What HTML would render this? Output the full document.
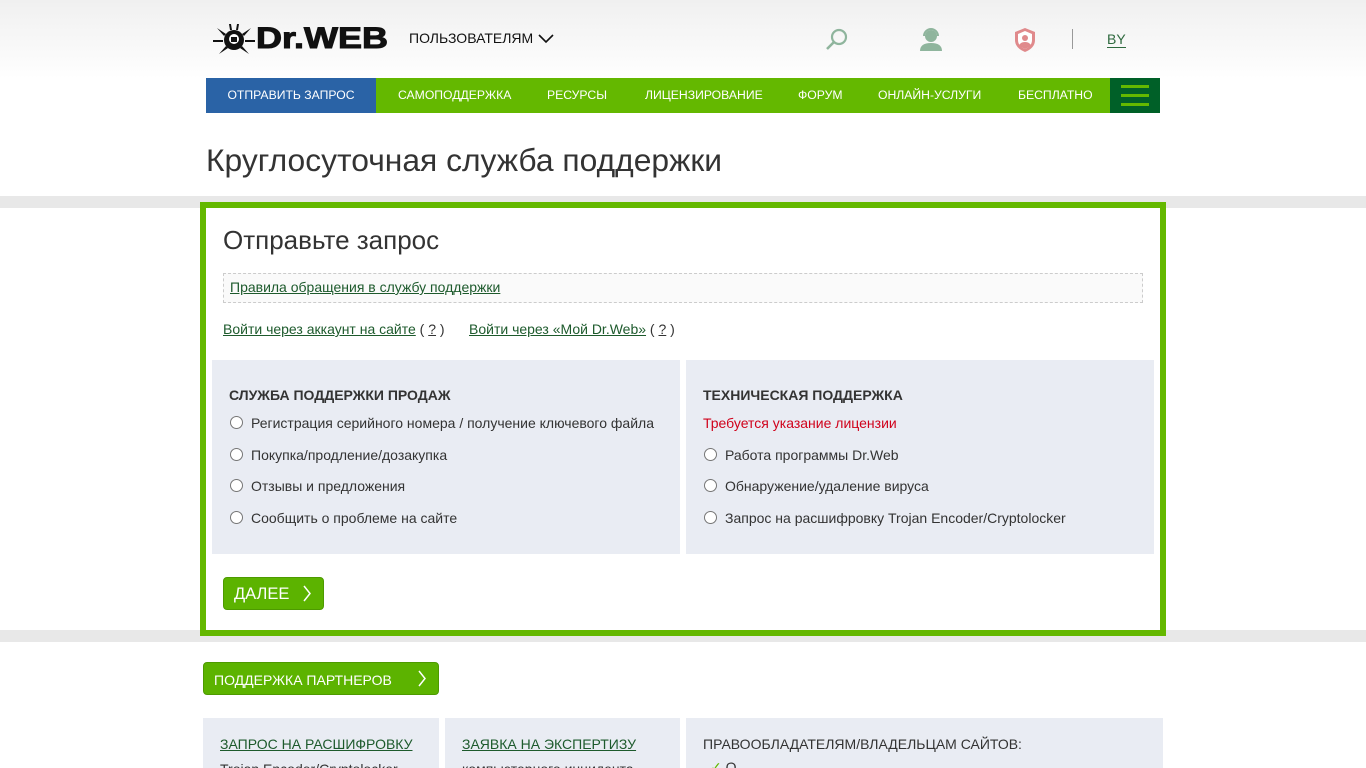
<!DOCTYPE html>
<html><head><meta charset="utf-8"><style>
*{margin:0;padding:0;box-sizing:border-box}
html,body{width:1366px;height:768px;overflow:hidden}
body{background:#fff;font-family:"Liberation Sans",sans-serif;color:#333;position:relative}
.a{position:absolute}
a{color:#1d5a2c}
.hdr{left:0;top:0;width:1366px;height:78px;background:linear-gradient(#f0f0f0,#fafafa 70%,#fff)}
.nav{top:78px;height:35px;left:206px;width:954px;background:#64b800;font-size:12.2px;color:#fff}
.nav div{position:absolute;top:0;height:35px;line-height:35px}
.band{left:0;width:1366px;height:12px;background:#e8e8e8}
.radio{width:13px;height:13px;border:1px solid #767676;border-radius:50%;background:#fff;position:absolute}
.opt{font-size:14px;color:#333}
.btn{background:#5cb300;border:1px solid #4d9a00;border-radius:4px;color:#fff}
</style></head><body>
<div class="a hdr"></div>
<svg class="a" style="left:213px;top:24px" width="42" height="32" viewBox="0 0 42 32"><g fill="#111"><circle cx="21" cy="16" r="10"/><path d="M4 4l9 6-2 2zM38 4l-9 6 2 2zM0 16h10v2H0zM32 16h10v2H32zM6 30l7-8 2 2zM36 30l-7-8-2 2zM16 0h2l1 6h-2zM26 0h-2l-1 6h2z"/></g><circle cx="21" cy="15" r="5" fill="#fff"/><rect x="18" y="13" width="6" height="5" fill="#111"/></svg>
<div class="a" style="left:256px;top:22px;font-size:30px;font-weight:bold;color:#111;transform:scaleX(1.2);transform-origin:0 0;-webkit-text-stroke:1px #111">Dr.WEB</div>
<div class="a" style="left:409px;top:30px;font-size:14px;color:#111">ПОЛЬЗОВАТЕЛЯМ</div>
<svg class="a" style="left:538px;top:34px" width="16" height="10"><path d="M1 1l7 7 7-7" stroke="#111" stroke-width="1.6" fill="none"/></svg>
<svg class="a" style="left:825px;top:27px" width="24" height="24"><circle cx="14" cy="10" r="7" stroke="#8fb59d" stroke-width="2.2" fill="none"/><path d="M9 15l-7 7" stroke="#8fb59d" stroke-width="2.6"/></svg>
<svg class="a" style="left:918px;top:27px" width="26" height="26"><circle cx="13" cy="9" r="6" fill="#8fb59d"/><path d="M6 9a7 7 0 0 1 14 0" stroke="#8fb59d" stroke-width="2" fill="none"/><path d="M2 24q0-8 11-8q11 0 11 8z" fill="#8fb59d"/></svg>
<svg class="a" style="left:1013px;top:27px" width="24" height="26"><path d="M12 1l10 4v8q0 8-10 12Q2 21 2 13V5z" fill="#e08a8c"/><path d="M12 4l7 3v6q0 6-7 9q-7-3-7-9V7z" fill="#fff"/><circle cx="12" cy="11" r="3" fill="#e08a8c"/><path d="M6 19q1-4 6-4t6 4l-6 3z" fill="#e08a8c"/></svg>
<div class="a" style="left:1072px;top:29px;width:1px;height:20px;background:#999"></div>
<div class="a" style="left:1107px;top:31px;font-size:14px;color:#2f6a3f;border-bottom:1.5px solid #2f6a3f;line-height:16px">BY</div>
<div class="a nav">
<div style="left:0;width:170px;background:#2a63a6;text-align:center">ОТПРАВИТЬ ЗАПРОС</div>
<div style="left:192px">САМОПОДДЕРЖКА</div>
<div style="left:341px">РЕСУРСЫ</div>
<div style="left:439px">ЛИЦЕНЗИРОВАНИЕ</div>
<div style="left:592px">ФОРУМ</div>
<div style="left:672px">ОНЛАЙН-УСЛУГИ</div>
<div style="left:812px">БЕСПЛАТНО</div>
<div style="left:904px;width:50px;background:#006028"><div style="position:absolute;left:11px;top:7px;width:28px;height:3px;background:#64b800"></div><div style="position:absolute;left:11px;top:16px;width:28px;height:3px;background:#64b800"></div><div style="position:absolute;left:11px;top:25px;width:28px;height:3px;background:#64b800"></div></div>
</div>
<div class="a" style="left:206px;top:142px;font-size:31.8px;color:#333">Круглосуточная служба поддержки</div>
<div class="a band" style="top:196px"></div>
<div class="a band" style="top:630px"></div>
<div class="a" style="left:200px;top:202px;width:966px;height:434px;border:6px solid #64b800;background:#fff"></div>
<div class="a" style="left:223px;top:225px;font-size:26px;color:#333">Отправьте запрос</div>
<div class="a" style="left:223px;top:273px;width:920px;height:30px;border:1px dashed #ccc;background:#fafafa;font-size:14px;padding:5px 6px"><a href="#">Правила обращения в службу поддержки</a></div>
<div class="a" style="left:223px;top:321px;font-size:14px"><a href="#">Войти через аккаунт на сайте</a> ( <u>?</u> )</div>
<div class="a" style="left:469px;top:321px;font-size:14px"><a href="#">Войти через «Мой Dr.Web»</a> ( <u>?</u> )</div>
<div class="a" style="left:212px;top:360px;width:468px;height:194px;background:#e9ecf3"></div>
<div class="a" style="left:686px;top:360px;width:468px;height:194px;background:#e9ecf3"></div>
<div class="a" style="left:229px;top:387px;font-size:14px;font-weight:bold;color:#333">СЛУЖБА ПОДДЕРЖКИ ПРОДАЖ</div>
<div class="radio" style="left:230px;top:416px"></div><div class="a opt" style="left:251px;top:415px">Регистрация серийного номера / получение ключевого файла</div>
<div class="radio" style="left:230px;top:448px"></div><div class="a opt" style="left:251px;top:447px">Покупка/продление/дозакупка</div>
<div class="radio" style="left:230px;top:479px"></div><div class="a opt" style="left:251px;top:478px">Отзывы и предложения</div>
<div class="radio" style="left:230px;top:511px"></div><div class="a opt" style="left:251px;top:510px">Сообщить о проблеме на сайте</div>
<div class="a" style="left:703px;top:387px;font-size:14px;font-weight:bold;color:#333">ТЕХНИЧЕСКАЯ ПОДДЕРЖКА</div>
<div class="a opt" style="left:703px;top:415px;color:#d0021b">Требуется указание лицензии</div>
<div class="radio" style="left:704px;top:448px"></div><div class="a opt" style="left:725px;top:447px">Работа программы Dr.Web</div>
<div class="radio" style="left:704px;top:479px"></div><div class="a opt" style="left:725px;top:478px">Обнаружение/удаление вируса</div>
<div class="radio" style="left:704px;top:511px"></div><div class="a opt" style="left:725px;top:510px">Запрос на расшифровку Trojan Encoder/Cryptolocker</div>
<div class="a btn" style="left:223px;top:577px;width:101px;height:33px;font-size:16.5px;padding:7px 10px">ДАЛЕЕ</div>
<svg class="a" style="left:302px;top:585px" width="10" height="17"><path d="M2 1l6 7.5L2 16" stroke="#fff" stroke-width="1.5" fill="none"/></svg>
<div class="a btn" style="left:203px;top:662px;width:236px;height:33px;font-size:14px;padding:9px 10px">ПОДДЕРЖКА ПАРТНЕРОВ</div>
<svg class="a" style="left:417px;top:670px" width="10" height="17"><path d="M2 1l6 7.5L2 16" stroke="#fff" stroke-width="1.5" fill="none"/></svg>
<div class="a" style="left:203px;top:718px;width:236px;height:60px;background:#e9ecf3"></div>
<div class="a" style="left:445px;top:718px;width:235px;height:60px;background:#e9ecf3"></div>
<div class="a" style="left:686px;top:718px;width:477px;height:60px;background:#e9ecf3"></div>
<div class="a" style="left:220px;top:736px;font-size:14px"><a href="#">ЗАПРОС НА РАСШИФРОВКУ</a></div>
<div class="a" style="left:220px;top:761px;font-size:14px">Trojan.Encoder/Cryptolocker</div>
<div class="a" style="left:462px;top:736px;font-size:14px"><a href="#">ЗАЯВКА НА ЭКСПЕРТИЗУ</a></div>
<div class="a" style="left:462px;top:761px;font-size:14px">компьютерного инцидента</div>
<div class="a" style="left:703px;top:736px;font-size:14px">ПРАВООБЛАДАТЕЛЯМ/ВЛАДЕЛЬЦАМ САЙТОВ:</div>
<div class="a" style="left:710px;top:759px;font-size:14px;color:#64b800">✓ <span style="color:#333">О</span></div>
</body></html>
